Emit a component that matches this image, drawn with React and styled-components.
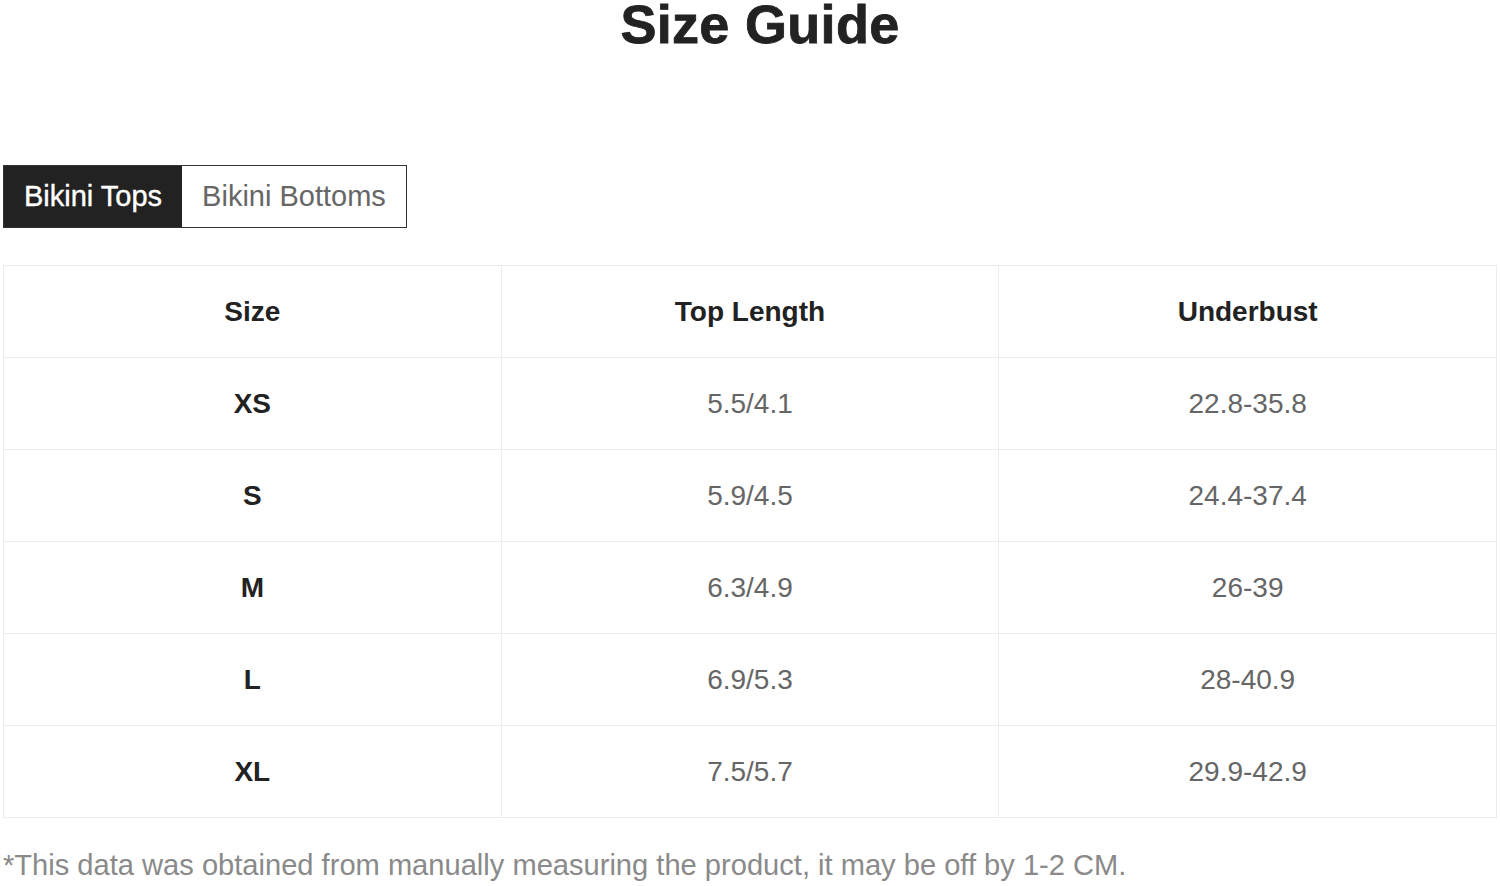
import React, { useState } from 'react';
import styled, { createGlobalStyle } from 'styled-components';

const GlobalStyle = createGlobalStyle`
  body {
    margin: 0;
    background: #ffffff;
    font-family: "Liberation Sans", Arial, sans-serif;
  }
`;

const Page = styled.div`
  padding: 0 3px;
  overflow: hidden;
`;

const Title = styled.h1`
  margin: 0;
  font-size: 54px;
  line-height: 48px;
  font-weight: 700;
  color: #222222;
  text-align: center;
  letter-spacing: 0.3px;
  padding-left: 20px;
  -webkit-text-stroke: 0.8px #222222;
`;

const Tabs = styled.div`
  display: inline-flex;
  margin-top: 117px;
  border: 1px solid #333333;
`;

const Tab = styled.button`
  height: 61px;
  padding: 0 20px;
  border: none;
  font-family: inherit;
  font-size: 29px;
  cursor: pointer;
  background: ${props => (props.active ? '#222222' : '#ffffff')};
  color: ${props => (props.active ? '#ffffff' : '#666666')};
  -webkit-text-stroke: ${props => (props.active ? '0.4px #ffffff' : '0')};
`;

const Table = styled.table`
  margin-top: 37px;
  width: 1494px;
  border-collapse: collapse;
  table-layout: fixed;
`;

const HeadCell = styled.th`
  height: 91px;
  padding: 0;
  border: 1px solid #ececec;
  font-size: 28px;
  font-weight: 700;
  color: #222222;
  text-align: center;
`;

const Cell = styled.td`
  height: 91px;
  padding: 0;
  border: 1px solid #ececec;
  font-size: 28px;
  text-align: center;
  font-weight: ${props => (props.bold ? 700 : 400)};
  color: ${props => (props.bold ? '#222222' : '#666666')};
`;

const Note = styled.p`
  margin: 31px 0 0;
  font-size: 29.1px;
  color: #8a8a8a;
`;

const tops = [
  ['XS', '5.5/4.1', '22.8-35.8'],
  ['S', '5.9/4.5', '24.4-37.4'],
  ['M', '6.3/4.9', '26-39'],
  ['L', '6.9/5.3', '28-40.9'],
  ['XL', '7.5/5.7', '29.9-42.9'],
];

const bottoms = [
  ['XS', '-', '-'],
  ['S', '-', '-'],
  ['M', '-', '-'],
  ['L', '-', '-'],
  ['XL', '-', '-'],
];

export default function App() {
  const [tab, setTab] = useState('tops');
  const rows = tab === 'tops' ? tops : bottoms;

  return (
    <Page>
      <GlobalStyle />
      <Title>Size Guide</Title>
      <Tabs>
        <Tab active={tab === 'tops'} onClick={() => setTab('tops')}>Bikini Tops</Tab>
        <Tab active={tab === 'bottoms'} onClick={() => setTab('bottoms')}>Bikini Bottoms</Tab>
      </Tabs>
      <Table>
        <thead>
          <tr>
            <HeadCell>Size</HeadCell>
            <HeadCell>Top Length</HeadCell>
            <HeadCell>Underbust</HeadCell>
          </tr>
        </thead>
        <tbody>
          {rows.map(r => (
            <tr key={r[0]}>
              <Cell bold>{r[0]}</Cell>
              <Cell>{r[1]}</Cell>
              <Cell>{r[2]}</Cell>
            </tr>
          ))}
        </tbody>
      </Table>
      <Note>*This data was obtained from manually measuring the product, it may be off by 1-2 CM.</Note>
    </Page>
  );
}
